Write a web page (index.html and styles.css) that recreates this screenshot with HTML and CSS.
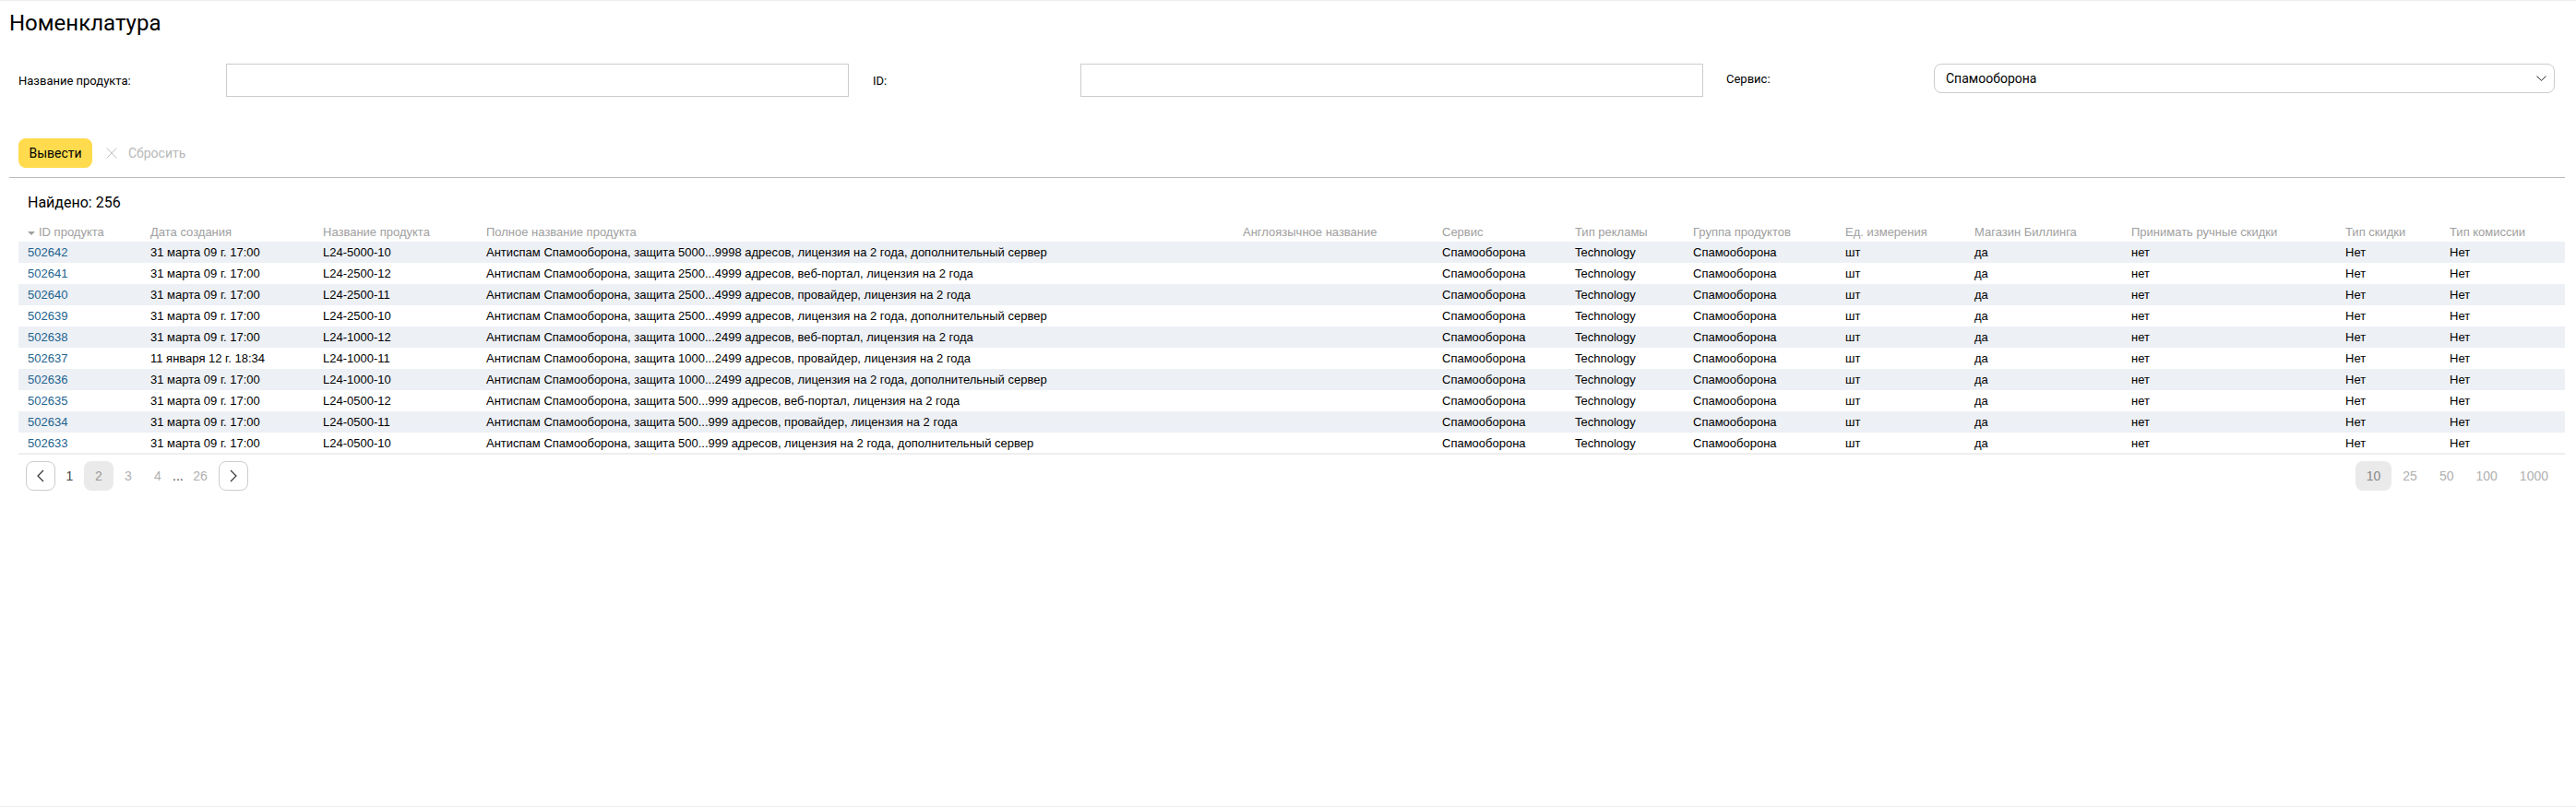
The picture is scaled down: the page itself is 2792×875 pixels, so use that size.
FILE: index.html
```html
<!DOCTYPE html>
<html lang="ru">
<head>
  <meta charset="UTF-8" />
  <title>Номенклатура</title>
  <link rel="stylesheet" href="styles.css">
</head>
<body>

<div class="page">
  <h1 class="title">Номенклатура</h1>

  <!-- Filters -->
  <div class="filters">
    <div class="filter">
      <label class="filter-label">Название продукта:</label>
      <input class="text-input" type="text">
    </div>
    <div class="filter">
      <label class="filter-label">ID:</label>
      <input class="text-input" type="text">
    </div>
    <div class="filter filter-select">
      <label class="filter-label">Сервис:</label>
      <div class="select-box">
        <span>Спамооборона</span>
        <svg class="chevron" width="11" height="6" viewBox="0 0 11 6"><path d="M0.5 0.5L5.5 5.3L10.5 0.5" fill="none" stroke="#222" stroke-width="1"/></svg>
      </div>
    </div>
  </div>

  <div class="actions">
    <button class="submit-btn">Вывести</button>
    <button class="reset-btn">
      <svg width="12" height="12" viewBox="0 0 12 12"><path d="M0.5 0.5L11.5 11.5M11.5 0.5L0.5 11.5" fill="none" stroke="#c4c4c4" stroke-width="1"/></svg>
      Сбросить
    </button>
  </div>

  <div class="found">Найдено: 256</div>

  <!-- Results -->
  <table class="results">
    <colgroup>
      <col class="c-id"><col class="c-date"><col class="c-name"><col class="c-full"><col class="c-eng">
      <col class="c-service"><col class="c-ad"><col class="c-group"><col class="c-unit"><col class="c-shop">
      <col class="c-manual"><col class="c-disc"><col class="c-comm">
    </colgroup>
    <thead>
      <tr>
        <th><span class="sort-mark"></span>ID продукта</th>
        <th>Дата создания</th>
        <th>Название продукта</th>
        <th>Полное название продукта</th>
        <th>Англоязычное название</th>
        <th>Сервис</th>
        <th>Тип рекламы</th>
        <th>Группа продуктов</th>
        <th>Ед. измерения</th>
        <th>Магазин Биллинга</th>
        <th>Принимать ручные скидки</th>
        <th>Тип скидки</th>
        <th>Тип комиссии</th>
      </tr>
    </thead>
    <tbody>
      <tr><td><a href="#">502642</a></td><td>31 марта 09 г. 17:00</td><td>L24-5000-10</td><td>Антиспам Спамооборона, защита 5000...9998 адресов, лицензия на 2 года, дополнительный сервер</td><td></td><td>Спамооборона</td><td>Technology</td><td>Спамооборона</td><td>шт</td><td>да</td><td>нет</td><td>Нет</td><td>Нет</td></tr>
      <tr><td><a href="#">502641</a></td><td>31 марта 09 г. 17:00</td><td>L24-2500-12</td><td>Антиспам Спамооборона, защита 2500...4999 адресов, веб-портал, лицензия на 2 года</td><td></td><td>Спамооборона</td><td>Technology</td><td>Спамооборона</td><td>шт</td><td>да</td><td>нет</td><td>Нет</td><td>Нет</td></tr>
      <tr><td><a href="#">502640</a></td><td>31 марта 09 г. 17:00</td><td>L24-2500-11</td><td>Антиспам Спамооборона, защита 2500...4999 адресов, провайдер, лицензия на 2 года</td><td></td><td>Спамооборона</td><td>Technology</td><td>Спамооборона</td><td>шт</td><td>да</td><td>нет</td><td>Нет</td><td>Нет</td></tr>
      <tr><td><a href="#">502639</a></td><td>31 марта 09 г. 17:00</td><td>L24-2500-10</td><td>Антиспам Спамооборона, защита 2500...4999 адресов, лицензия на 2 года, дополнительный сервер</td><td></td><td>Спамооборона</td><td>Technology</td><td>Спамооборона</td><td>шт</td><td>да</td><td>нет</td><td>Нет</td><td>Нет</td></tr>
      <tr><td><a href="#">502638</a></td><td>31 марта 09 г. 17:00</td><td>L24-1000-12</td><td>Антиспам Спамооборона, защита 1000...2499 адресов, веб-портал, лицензия на 2 года</td><td></td><td>Спамооборона</td><td>Technology</td><td>Спамооборона</td><td>шт</td><td>да</td><td>нет</td><td>Нет</td><td>Нет</td></tr>
      <tr><td><a href="#">502637</a></td><td>11 января 12 г. 18:34</td><td>L24-1000-11</td><td>Антиспам Спамооборона, защита 1000...2499 адресов, провайдер, лицензия на 2 года</td><td></td><td>Спамооборона</td><td>Technology</td><td>Спамооборона</td><td>шт</td><td>да</td><td>нет</td><td>Нет</td><td>Нет</td></tr>
      <tr><td><a href="#">502636</a></td><td>31 марта 09 г. 17:00</td><td>L24-1000-10</td><td>Антиспам Спамооборона, защита 1000...2499 адресов, лицензия на 2 года, дополнительный сервер</td><td></td><td>Спамооборона</td><td>Technology</td><td>Спамооборона</td><td>шт</td><td>да</td><td>нет</td><td>Нет</td><td>Нет</td></tr>
      <tr><td><a href="#">502635</a></td><td>31 марта 09 г. 17:00</td><td>L24-0500-12</td><td>Антиспам Спамооборона, защита 500...999 адресов, веб-портал, лицензия на 2 года</td><td></td><td>Спамооборона</td><td>Technology</td><td>Спамооборона</td><td>шт</td><td>да</td><td>нет</td><td>Нет</td><td>Нет</td></tr>
      <tr><td><a href="#">502634</a></td><td>31 марта 09 г. 17:00</td><td>L24-0500-11</td><td>Антиспам Спамооборона, защита 500...999 адресов, провайдер, лицензия на 2 года</td><td></td><td>Спамооборона</td><td>Technology</td><td>Спамооборона</td><td>шт</td><td>да</td><td>нет</td><td>Нет</td><td>Нет</td></tr>
      <tr><td><a href="#">502633</a></td><td>31 марта 09 г. 17:00</td><td>L24-0500-10</td><td>Антиспам Спамооборона, защита 500...999 адресов, лицензия на 2 года, дополнительный сервер</td><td></td><td>Спамооборона</td><td>Technology</td><td>Спамооборона</td><td>шт</td><td>да</td><td>нет</td><td>Нет</td><td>Нет</td></tr>
    </tbody>
  </table>

  <!-- Pagination -->
  <div class="pager-row">
    <div class="pager">
      <button class="page-arrow"><svg width="8" height="14" viewBox="0 0 8 14"><path d="M7 1L1 7L7 13" fill="none" stroke="#333" stroke-width="1.2"/></svg></button>
      <span class="page-item page-done">1</span>
      <span class="page-item page-current">2</span>
      <span class="page-item">3</span>
      <span class="page-item">4</span>
      <span class="page-dots">...</span>
      <span class="page-item page-last">26</span>
      <button class="page-arrow"><svg width="8" height="14" viewBox="0 0 8 14"><path d="M1 1L7 7L1 13" fill="none" stroke="#333" stroke-width="1.2"/></svg></button>
    </div>
    <div class="page-sizes">
      <span class="size-item size-current">10</span>
      <span class="size-item">25</span>
      <span class="size-item">50</span>
      <span class="size-item">100</span>
      <span class="size-item">1000</span>
    </div>
  </div>
</div>

</body>
</html>
```

FILE: styles.css
```css
* {
  margin: 0;
  padding: 0;
  box-sizing: border-box;
}

html, body {
  height: 100%;
}

body {
  background: #fff;
  color: #000;
  font-family: "Liberation Sans", Arial, sans-serif;
  overflow: hidden;
}

.page {
  height: 875px;
  border-top: 1px solid #eee;
  border-bottom: 1px solid #eee;
  padding-right: 12px;
}

.title {
  font-family: Roboto, sans-serif;
  font-size: 24px;
  font-weight: 400;
  line-height: 30px;
  padding: 9px 0 0 10px;
  height: 68px;
}

.filters {
  display: flex;
  padding-left: 20px;
  height: 81px;
}

.filter {
  display: flex;
  width: 926px;
  height: 36px;
  align-items: center;
}

.filter-label {
  width: 225px;
  font-family: Roboto, sans-serif;
  font-size: 13px;
  flex-shrink: 0;
}

.text-input {
  width: 675px;
  height: 36px;
  border: 1px solid #ccc;
  background: #fff;
}

.filter-select {
  width: auto;
  flex: 1;
  height: 32px;
  margin-left: -1px;
  padding-right: 11px;
}

.select-box {
  flex: 1;
  height: 32px;
  display: flex;
  align-items: center;
  justify-content: space-between;
  padding: 0 8px 0 12px;
  border: 1px solid #ccc;
  border-radius: 8px;
  font-family: Roboto, sans-serif;
  font-size: 14px;
}

.actions {
  display: flex;
  align-items: center;
  height: 43px;
  margin-left: 10px;
  padding: 0 0 11px 10px;
  border-bottom: 1px solid #bbb;
}

.submit-btn {
  width: 80px;
  height: 32px;
  border: none;
  border-radius: 8px;
  background: #ffdb4d;
  color: #000;
  font-family: Roboto, sans-serif;
  font-size: 14px;
}

.reset-btn {
  display: flex;
  align-items: center;
  gap: 12px;
  margin-left: 15px;
  border: none;
  background: none;
  color: #b8b8b8;
  font-family: Roboto, sans-serif;
  font-size: 14px;
}

.found {
  font-family: Roboto, sans-serif;
  font-size: 16px;
  line-height: 22px;
  padding: 16px 0 0 30px;
  height: 48px;
}

.results {
  margin-left: 20px;
  width: 2760px;
  table-layout: fixed;
  border-collapse: collapse;
  font-size: 13px;
  border-bottom: 2px solid #eee;
}

.c-id { width: 133px; }
.c-date { width: 187px; }
.c-name { width: 177px; }
.c-full { width: 820px; }
.c-eng { width: 216px; }
.c-service { width: 144px; }
.c-ad { width: 128px; }
.c-group { width: 165px; }
.c-unit { width: 140px; }
.c-shop { width: 170px; }
.c-manual { width: 232px; }
.c-disc { width: 113px; }
.c-comm { width: 135px; }

.results th {
  height: 21px;
  padding: 0 0 0 10px;
  text-align: left;
  font-weight: 400;
  color: #a0a0a0;
  white-space: nowrap;
}

.results td {
  height: 23px;
  padding: 0 0 0 10px;
  white-space: nowrap;
}

.results tbody tr:nth-child(odd) {
  background: #edf0f5;
}

.results a {
  color: #22638f;
  text-decoration: none;
}

.sort-mark {
  display: inline-block;
  width: 0;
  height: 0;
  margin-right: 4px;
  vertical-align: 1px;
  border-left: 4px solid transparent;
  border-right: 4px solid transparent;
  border-top: 4px solid #a0a0a0;
}

.pager-row {
  display: flex;
  justify-content: space-between;
  padding: 7px 6px 0 28px;
}

.pager {
  display: flex;
  align-items: center;
  height: 32px;
}

.page-arrow {
  width: 32px;
  height: 32px;
  display: flex;
  align-items: center;
  justify-content: center;
  background: #fff;
  border: 1px solid #ccc;
  border-radius: 8px;
}

.page-item {
  width: 32px;
  height: 32px;
  line-height: 32px;
  text-align: center;
  font-size: 14px;
  color: #b0b0b0;
}

.page-done {
  width: 31px;
  color: #444;
}

.page-current {
  background: #eaeaea;
  border-radius: 8px;
  color: #999;
}

.page-dots {
  width: 10px;
  text-align: center;
  font-size: 14px;
  color: #444;
}

.page-last {
  width: 30px;
  margin: 0 5px;
}

.page-sizes {
  display: flex;
  height: 32px;
}

.size-item {
  height: 32px;
  line-height: 32px;
  padding: 0 12px;
  font-size: 14px;
  color: #b0b0b0;
}

.size-current {
  background: #eaeaea;
  border-radius: 8px;
  color: #888;
}
```
